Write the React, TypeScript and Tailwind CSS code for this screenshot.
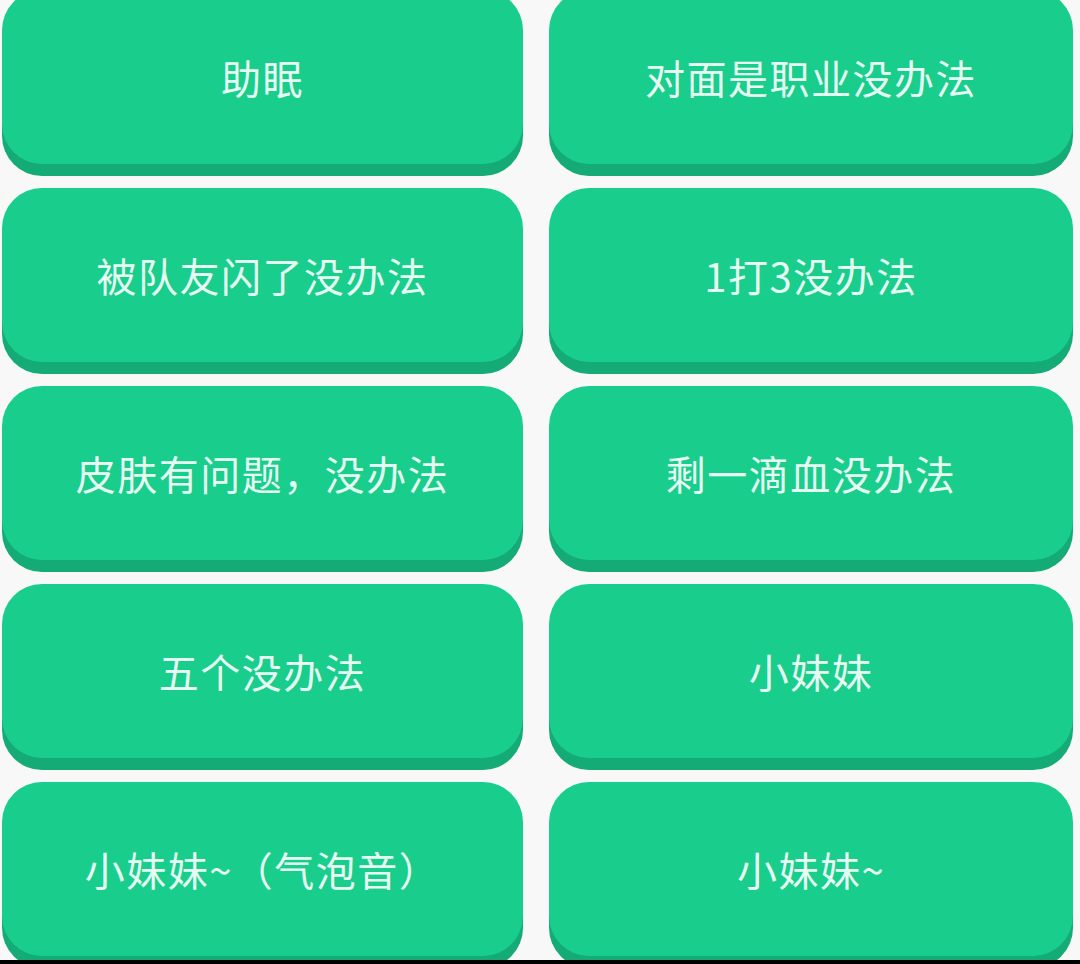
import React from "react";

const sounds: string[] = [
  "助眠",
  "对面是职业没办法",
  "被队友闪了没办法",
  "1打3没办法",
  "皮肤有问题，没办法",
  "剩一滴血没办法",
  "五个没办法",
  "小妹妹",
  "小妹妹~（气泡音）",
  "小妹妹~",
];

const SoundButton: React.FC<{ label: string }> = ({ label }) => (
  <button className="h-[174px] w-full rounded-[40px] bg-[#19cd8c] shadow-[0_12px_0_#14ab76] flex items-center justify-center text-[40px] tracking-[1.5px] text-[#e6fbf1] font-['Noto_Sans_CJK_SC',sans-serif] font-normal">
    {label}
  </button>
);

export default function App() {
  return (
    <div className="h-[964px] w-[1080px] overflow-hidden bg-[#f7f8f7] flex flex-col">
      <div className="flex-1 overflow-hidden">
        <div className="-mt-[10px] grid grid-cols-[521px_524px] gap-x-[26px] gap-y-[24px] pl-[2px]">
          {sounds.map((s) => (
            <SoundButton key={s} label={s} />
          ))}
        </div>
      </div>
      <div className="h-[4px] bg-black" />
    </div>
  );
}
